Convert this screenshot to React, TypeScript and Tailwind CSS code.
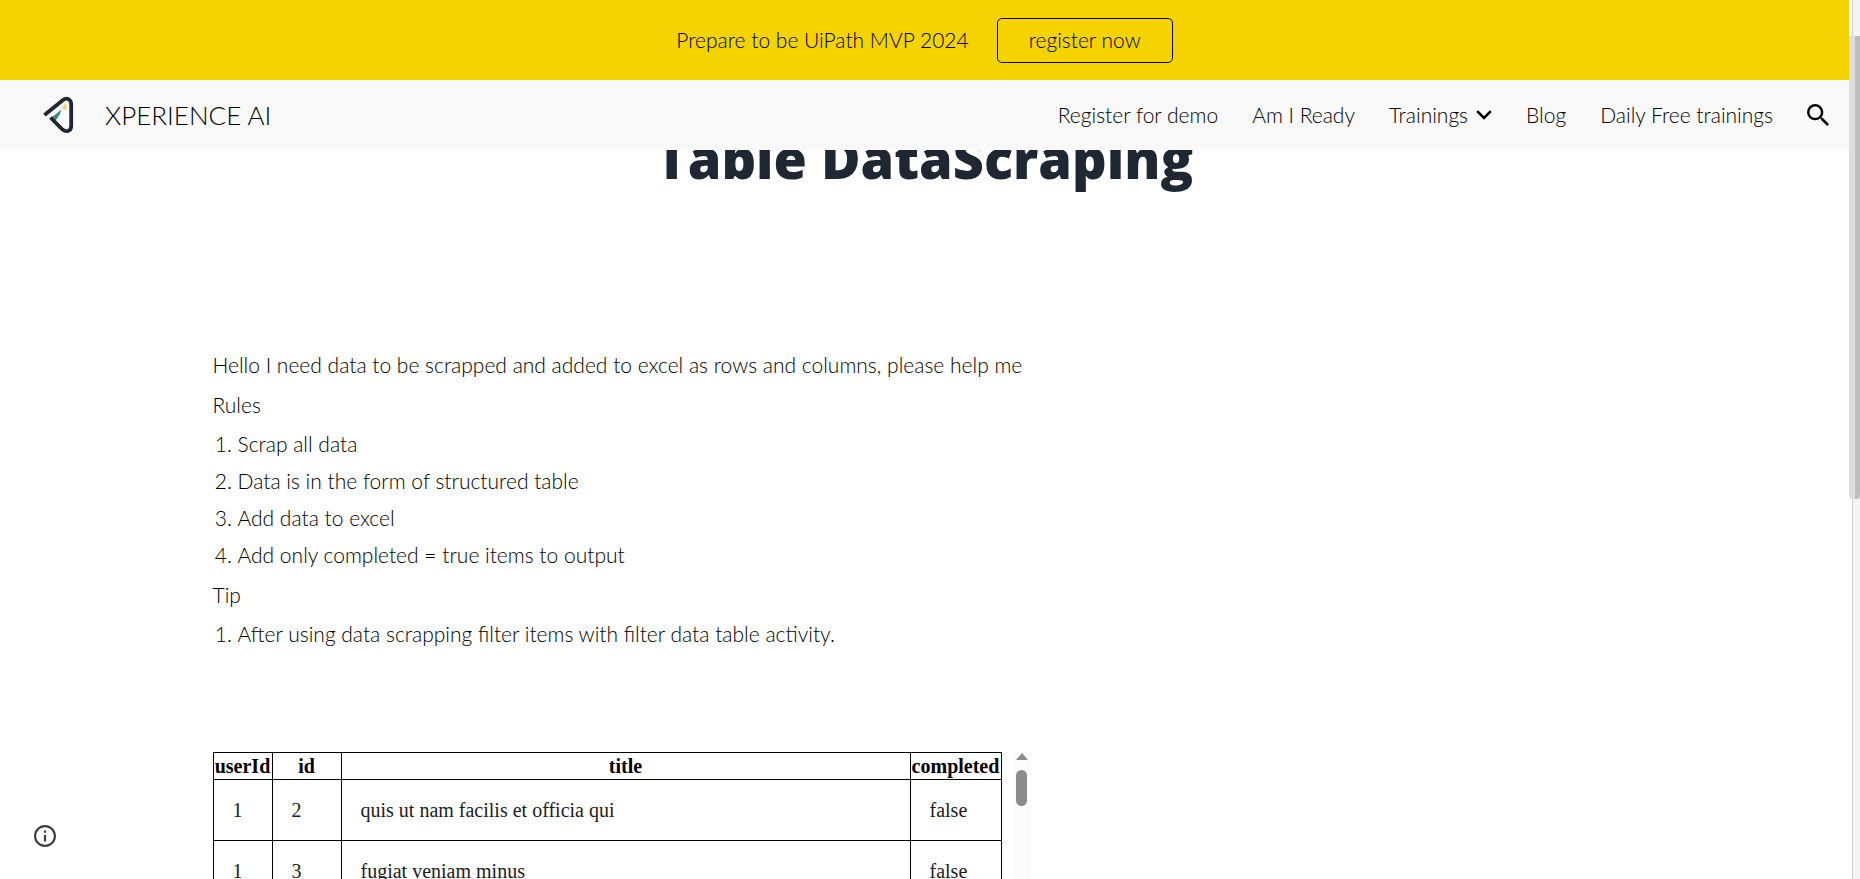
import React from "react";

const rules = [
  "Scrap all data",
  "Data is in the form of structured table",
  "Add data to excel",
  "Add only completed = true items to output",
];

const tips = ["After using data scrapping filter items with filter data table activity."];

const rows = [
  { userId: 1, id: 2, title: "quis ut nam facilis et officia qui", completed: "false" },
  { userId: 1, id: 3, title: "fugiat veniam minus", completed: "false" },
];

function Logo() {
  return (
    <svg viewBox="0 0 32 40" className="h-10 w-8" fill="none" aria-hidden="true">
      <path d="M9.500 22.500 L19.500 14.500 L17.500 20 L13.500 25.500Z" fill="#3f8585" />
      <path d="M20.500 11.500 L24.500 8.500 V15 L20.500 13.500Z" fill="#f3cf5c" />
      <path
        d="M2.500 20 L21 5 Q24 2.500 27 4.500 Q29.200 6 29.200 9 V31 Q29.200 35 26 36 Q23 36.500 20.500 34.500 L8.500 22.500"
        stroke="#1f2731"
        strokeWidth="3.8"
      />
    </svg>
  );
}

function Banner() {
  return (
    <div className="flex h-20 shrink-0 items-center justify-center gap-7 bg-[#f5d300] text-[21px] font-light text-black">
      <p>Prepare to be UiPath MVP 2024</p>
      <a
        href="#register"
        className="flex h-[45px] w-44 items-center justify-center rounded-[5px] border border-black"
      >
        register now
      </a>
    </div>
  );
}

function Header() {
  return (
    <header className="flex h-[70px] shrink-0 items-center justify-between bg-[#f9f9f9] pr-5 pl-[42px] text-black">
      <a href="#home" className="flex items-center gap-[31px]">
        <Logo />
        <span className="text-[26px] font-light">XPERIENCE AI</span>
      </a>
      <nav className="flex items-center gap-[34px] text-[21px] font-light">
        <a href="#demo">Register for demo</a>
        <a href="#ready">Am I Ready</a>
        <a href="#trainings" className="flex items-center gap-2">
          Trainings
          <svg viewBox="0 0 16 10" className="h-2.5 w-4" fill="none" stroke="currentColor" strokeWidth="2.6" aria-hidden="true">
            <path d="M1.200 1.200 L8 8 L14.800 1.200" />
          </svg>
        </a>
        <a href="#blog">Blog</a>
        <a href="#daily">Daily Free trainings</a>
        <button type="button" aria-label="Search">
          <svg viewBox="3 3 17.500 17.500" className="size-[22px]" fill="currentColor" aria-hidden="true">
            <path d="M15.500 14h-.79l-.28-.27A6.471 6.471 0 0 0 16 9.500 6.500 6.500 0 1 0 9.500 16c1.610 0 3.090-.59 4.230-1.570l.27.28v.79l5 4.990L20.490 19l-4.990-5zm-6 0C7.010 14 5 11.990 5 9.500S7.010 5 9.500 5 14 7.010 14 9.500 11.990 14 9.500 14z" />
          </svg>
        </button>
      </nav>
    </header>
  );
}

function DataTable() {
  return (
    <div className="mt-[104px] flex w-[818px] justify-between">
      <table className="w-[789px] table-fixed border-collapse self-start font-['Liberation_Serif',serif] text-xl leading-6 font-normal text-black">
        <colgroup>
          <col className="w-[59px]" />
          <col className="w-[69px]" />
          <col />
          <col className="w-[91px]" />
        </colgroup>
        <thead>
          <tr className="h-[27px]">
            {["userId", "id", "title", "completed"].map((h) => (
              <th key={h} scope="col" className="border border-black p-0 text-center font-bold">
                {h}
              </th>
            ))}
          </tr>
        </thead>
        <tbody>
          {rows.map((r) => (
            <tr key={r.id} className="h-[61px] text-[#1c1c1c]">
              <td className="border border-black px-[19px] py-0">{r.userId}</td>
              <td className="border border-black px-[19px] py-0">{r.id}</td>
              <td className="border border-black px-[19px] py-0">{r.title}</td>
              <td className="border border-black px-[19px] py-0">{r.completed}</td>
            </tr>
          ))}
        </tbody>
      </table>
      <div className="flex w-[18px] flex-col items-center gap-2.5 bg-[#fcfcfc]" aria-hidden="true">
        <svg viewBox="0 0 12 7" className="mt-px h-[7px] w-3" fill="#8b8b8b">
          <path d="M6 0 L12 7 H0Z" />
        </svg>
        <div className="h-9 w-[11px] rounded-full bg-[#8b8b8b]" />
      </div>
    </div>
  );
}

export default function App() {
  return (
    <div className="flex h-screen overflow-hidden bg-white font-['Lato',sans-serif]">
      <div className="flex min-w-0 flex-1 flex-col">
        <Banner />
        <Header />
        <main className="relative min-h-0 flex-1 overflow-hidden">
          <h1 className="-mt-7 text-center font-['Open_Sans',sans-serif] text-[54px] leading-[72px] font-extrabold text-[#1f2733]">
            Table DataScraping
          </h1>
          <div className="mx-auto mt-[157px] w-full max-w-[1424px] text-[21px] leading-7 font-light text-black">
            <p>Hello I need data to be scrapped and added to excel as rows and columns, please help me</p>
            <p className="mt-3">Rules</p>
            <ol className="mt-[11px] list-decimal space-y-[9px] pl-[25px]">
              {rules.map((r) => (
                <li key={r}>{r}</li>
              ))}
            </ol>
            <p className="mt-3">Tip</p>
            <ol className="mt-[11px] list-decimal pl-[25px]">
              {tips.map((t) => (
                <li key={t}>{t}</li>
              ))}
            </ol>
            <DataTable />
          </div>
          <button type="button" aria-label="Page information" className="absolute bottom-8 left-[34px] text-[#3c3c3c]">
            <svg viewBox="2 2 20 20" className="size-[22px]" fill="currentColor" aria-hidden="true">
              <path d="M11 7h2v2h-2zm0 4h2v6h-2zm1-9C6.480 2 2 6.480 2 12s4.480 10 10 10 10-4.480 10-10S17.520 2 12 2m0 18c-4.410 0-8-3.590-8-8s3.590-8 8-8 8 3.590 8 8-3.590 8-8 8" />
            </svg>
          </button>
        </main>
      </div>
      <div className="flex w-[11px] shrink-0 flex-col bg-linear-to-r from-white from-30% via-[#c8c8cc] via-30% to-[#f4f4f4] to-40% pt-9" aria-hidden="true">
        <div className="h-[463px] rounded-b-sm bg-linear-to-r from-[#dddddd] from-50% to-[#bdbdbd] to-60%" />
      </div>
    </div>
  );
}
